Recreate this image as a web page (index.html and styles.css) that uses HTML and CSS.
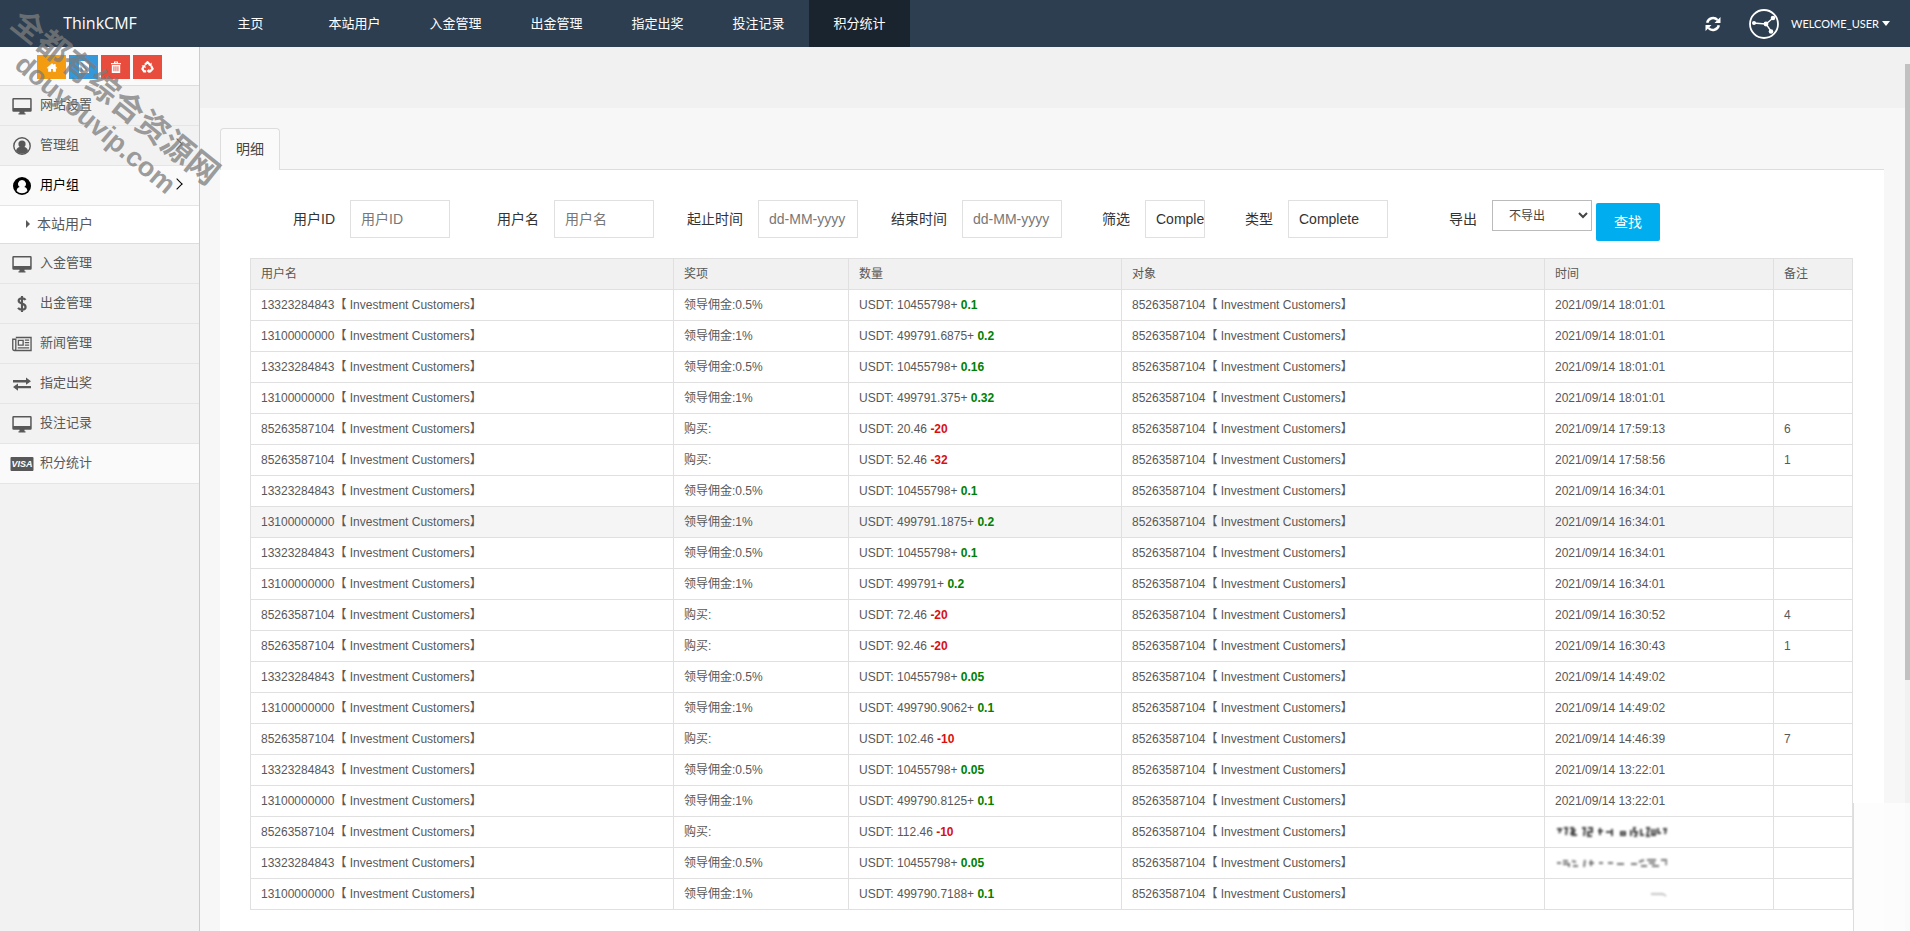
FILE: index.html
```html
<!DOCTYPE html>
<html lang="zh-CN">
<head>
<meta charset="utf-8">
<title>ThinkCMF</title>
<link rel="stylesheet" href="styles.css">
</head>
<body>
<svg class="defs" aria-hidden="true">
  <symbol id="i-desktop" viewBox="0 0 20 18"><path fill-rule="evenodd" d="M1.500 1h17a1.200 1.200 0 0 1 1.200 1.200v11.300a1.200 1.200 0 0 1-1.200 1.200h-6v1.500h1V17.500h-7v-1.300h1v-1.500h-6A1.200 1.200 0 0 1 .3 13.500V2.200A1.200 1.200 0 0 1 1.500 1zm.3 1.400v8.600h16.400V2.400z"/></symbol>
  <symbol id="i-user" viewBox="0 0 18 18"><circle cx="9" cy="9" r="8.200" fill="none" stroke="currentColor" stroke-width="1.400"/><circle cx="9" cy="7" r="3.600"/><path d="M3 14c.6-3 2.400-4 3.600-4h4.800c1.200 0 3 1 3.600 4a8 8 0 0 1-12 0z"/></symbol>
  <symbol id="i-user-solid" viewBox="0 0 18 18"><circle cx="9" cy="9" r="9"/><path fill="#fafafa" d="M9 3a3.900 3.900 0 0 0-2.300 7.100C4.600 10.500 3.900 12 3.600 14a7.600 7.600 0 0 0 10.800 0c-.3-2-1-3.500-3.100-3.900A3.900 3.900 0 0 0 9 3z"/></symbol>
  <symbol id="i-dollar" viewBox="0 0 12 20"><path d="M10 5.500C9 4.200 7.700 3.700 6 3.700c-2.300 0-3.700 1-3.700 2.800 0 4 7.700 2.200 7.700 6.800 0 1.900-1.500 3-4 3-1.900 0-3.400-.7-4.400-2M6 1v18" fill="none" stroke="currentColor" stroke-width="2.400"/></symbol>
  <symbol id="i-news" viewBox="0 0 21 16"><path d="M4 1.200h16v13.600H2.500A1.700 1.700 0 0 1 .8 13V3H4v10.300c0 .8-.6 1.500-1.500 1.500M6.700 4.200h5v5h-5zM13.500 4h4.500M13.500 6.600h4.500M13.500 9.200h4.500M6 12h12" fill="none" stroke="currentColor" stroke-width="1.400"/></symbol>
  <symbol id="i-exchange" viewBox="0 0 18 14"><path d="M0 3h13V.500L18 4.200l-5 3.500V5.500H0zM18 9H5V6.500L0 10l5 3.700v-2.400h13z"/></symbol>
  <symbol id="i-caret" viewBox="0 0 4 8"><path d="M0 0l4 4-4 4z"/></symbol>
  <symbol id="i-home" viewBox="0 0 14 12"><path d="M7 1L.8 6.500l.7.800L2.500 6.500V11h3.400V7.800h2.200V11h3.400V6.500l1 .8.700-.8-2-1.700V1.800H9.500v1.400z"/></symbol>
  <symbol id="i-globe" viewBox="0 0 12 12"><path fill-rule="evenodd" d="M1 0h7l3 3v9H1zm1.500 1.500l6 8.500L9.500 9 4 1.500zM2.500 5v5.500H6z"/></symbol>
  <symbol id="i-trash" viewBox="0 0 12 12"><path fill-rule="evenodd" d="M1 2h3V.5h4V2h3v1.300H1zm4-.6V2h2v-.6zM1.800 4h8.400v8H1.800zm1.700 1.300v5h.9v-5zm2 0v5h.9v-5zm2 0v5h.9v-5z"/></symbol>
  <symbol id="i-recycle" viewBox="0 0 14 13"><path d="M4.200 4L7 1.300 9.800 4M11 5.500l1.500 3-2.500 2.700H8.500M5.500 11.200H3.300L1.500 8.500 3 5.500" fill="none" stroke="currentColor" stroke-width="2.400"/><path d="M11.500 1.600v4L8 4.800zM9 8.300v5l-3-2.500zM.5 5l4-.6.600 3.500z"/></symbol>
  <symbol id="i-refresh" viewBox="0 0 16 16"><path d="M2.200 6.700A6 6 0 0 1 12.500 4M13.800 9.300A6 6 0 0 1 3.500 12" fill="none" stroke="currentColor" stroke-width="2.500"/><path d="M15.500 1v6h-6zM.5 15V9h6z"/></symbol>
</svg>

<header class="topbar">
  <a class="brand" href="#">ThinkCMF</a>
  <nav class="topnav">
    <a class="home" href="#">主页</a>
    <a href="#">本站用户</a>
    <a href="#">入金管理</a>
    <a href="#">出金管理</a>
    <a href="#">指定出奖</a>
    <a href="#">投注记录</a>
    <a class="active" href="#">积分统计</a>
  </nav>
  <div class="account">
    <button class="plain" type="button" aria-label="刷新"><svg width="16" height="16"><use href="#i-refresh"/></svg></button>
    <button class="plain user" type="button">
      <svg class="avatar" viewBox="0 0 30 30"><circle cx="15" cy="15" r="14" fill="none" stroke="currentColor" stroke-width="1.800"/><path d="M4 14l13 1 7-6M17 15l5 7" fill="none" stroke="currentColor" stroke-width="1.300"/><circle cx="5" cy="14" r="2"/><circle cx="17" cy="15" r="2.400"/><circle cx="24" cy="9" r="2.300"/><circle cx="22" cy="22.500" r="2.300"/></svg>
      <span>WELCOME_USER</span>
      <svg width="8" height="5" viewBox="0 0 8 5"><path d="M0 0h8L4 5z"/></svg>
    </button>
  </div>
</header>

<div class="shell">
  <aside class="sidebar">
    <div class="shortcuts">
      <button class="orange" type="button" aria-label="首页"><svg width="12" height="11"><use href="#i-home"/></svg></button>
      <button class="blue" type="button" aria-label="编辑"><svg width="12" height="12"><use href="#i-globe"/></svg></button>
      <button class="red" type="button" aria-label="删除"><svg width="12" height="12"><use href="#i-trash"/></svg></button>
      <button class="red" type="button" aria-label="回收"><svg width="13" height="12"><use href="#i-recycle"/></svg></button>
    </div>
    <a class="item" href="#"><svg width="20" height="18"><use href="#i-desktop"/></svg>网站设置</a>
    <a class="item" href="#"><svg width="18" height="18"><use href="#i-user"/></svg>管理组<i class="arrow"></i></a>
    <a class="item open" href="#"><svg width="18" height="18"><use href="#i-user-solid"/></svg>用户组<i class="arrow"></i></a>
    <a class="subitem" href="#"><svg width="4" height="8"><use href="#i-caret"/></svg>本站用户</a>
    <a class="item" href="#"><svg width="20" height="18"><use href="#i-desktop"/></svg>入金管理</a>
    <a class="item" href="#"><svg width="12" height="18"><use href="#i-dollar"/></svg>出金管理</a>
    <a class="item" href="#"><svg width="20" height="16"><use href="#i-news"/></svg>新闻管理</a>
    <a class="item" href="#"><svg width="18" height="14"><use href="#i-exchange"/></svg>指定出奖</a>
    <a class="item" href="#"><svg width="20" height="18"><use href="#i-desktop"/></svg>投注记录</a>
    <a class="item current" href="#"><b class="visa">VISA</b>积分统计</a>
  </aside>

  <main class="content">
    <div class="strip"></div>
    <div class="tabs"><a class="tab" href="#">明细</a></div>
    <section class="panel">
      <form class="filters">
        <label for="uid">用户ID</label><input id="uid" type="text" placeholder="用户ID">
        <label for="uname">用户名</label><input id="uname" type="text" placeholder="用户名">
        <label for="from">起止时间</label><input id="from" type="text" placeholder="dd-MM-yyyy">
        <label for="to">结束时间</label><input id="to" type="text" placeholder="dd-MM-yyyy">
        <label class="narrow" for="filter">筛选</label><input id="filter" class="short" type="text" value="Complete">
        <label class="narrow" for="type">类型</label><input id="type" type="text" value="Complete">
        <label for="export">导出</label><select id="export"><option>不导出</option></select>
        <button class="search" type="submit">查找</button>
      </form>
      <table class="records">
        <colgroup><col class="c-user"><col class="c-award"><col class="c-amount"><col class="c-user"><col class="c-time"><col class="c-note"></colgroup>
        <thead><tr><th>用户名</th><th>奖项</th><th>数量</th><th>对象</th><th>时间</th><th>备注</th></tr></thead>
        <tbody>
          <tr><td>13323284843【 Investment Customers】</td><td>领导佣金:0.5%</td><td>USDT: 10455798+ <b class="up">0.1</b></td><td>85263587104【 Investment Customers】</td><td>2021/09/14 18:01:01</td><td></td></tr>
          <tr><td>13100000000【 Investment Customers】</td><td>领导佣金:1%</td><td>USDT: 499791.6875+ <b class="up">0.2</b></td><td>85263587104【 Investment Customers】</td><td>2021/09/14 18:01:01</td><td></td></tr>
          <tr><td>13323284843【 Investment Customers】</td><td>领导佣金:0.5%</td><td>USDT: 10455798+ <b class="up">0.16</b></td><td>85263587104【 Investment Customers】</td><td>2021/09/14 18:01:01</td><td></td></tr>
          <tr><td>13100000000【 Investment Customers】</td><td>领导佣金:1%</td><td>USDT: 499791.375+ <b class="up">0.32</b></td><td>85263587104【 Investment Customers】</td><td>2021/09/14 18:01:01</td><td></td></tr>
          <tr><td>85263587104【 Investment Customers】</td><td>购买:</td><td>USDT: 20.46 <b class="down">-20</b></td><td>85263587104【 Investment Customers】</td><td>2021/09/14 17:59:13</td><td>6</td></tr>
          <tr><td>85263587104【 Investment Customers】</td><td>购买:</td><td>USDT: 52.46 <b class="down">-32</b></td><td>85263587104【 Investment Customers】</td><td>2021/09/14 17:58:56</td><td>1</td></tr>
          <tr><td>13323284843【 Investment Customers】</td><td>领导佣金:0.5%</td><td>USDT: 10455798+ <b class="up">0.1</b></td><td>85263587104【 Investment Customers】</td><td>2021/09/14 16:34:01</td><td></td></tr>
          <tr class="hovered"><td>13100000000【 Investment Customers】</td><td>领导佣金:1%</td><td>USDT: 499791.1875+ <b class="up">0.2</b></td><td>85263587104【 Investment Customers】</td><td>2021/09/14 16:34:01</td><td></td></tr>
          <tr><td>13323284843【 Investment Customers】</td><td>领导佣金:0.5%</td><td>USDT: 10455798+ <b class="up">0.1</b></td><td>85263587104【 Investment Customers】</td><td>2021/09/14 16:34:01</td><td></td></tr>
          <tr><td>13100000000【 Investment Customers】</td><td>领导佣金:1%</td><td>USDT: 499791+ <b class="up">0.2</b></td><td>85263587104【 Investment Customers】</td><td>2021/09/14 16:34:01</td><td></td></tr>
          <tr><td>85263587104【 Investment Customers】</td><td>购买:</td><td>USDT: 72.46 <b class="down">-20</b></td><td>85263587104【 Investment Customers】</td><td>2021/09/14 16:30:52</td><td>4</td></tr>
          <tr><td>85263587104【 Investment Customers】</td><td>购买:</td><td>USDT: 92.46 <b class="down">-20</b></td><td>85263587104【 Investment Customers】</td><td>2021/09/14 16:30:43</td><td>1</td></tr>
          <tr><td>13323284843【 Investment Customers】</td><td>领导佣金:0.5%</td><td>USDT: 10455798+ <b class="up">0.05</b></td><td>85263587104【 Investment Customers】</td><td>2021/09/14 14:49:02</td><td></td></tr>
          <tr><td>13100000000【 Investment Customers】</td><td>领导佣金:1%</td><td>USDT: 499790.9062+ <b class="up">0.1</b></td><td>85263587104【 Investment Customers】</td><td>2021/09/14 14:49:02</td><td></td></tr>
          <tr><td>85263587104【 Investment Customers】</td><td>购买:</td><td>USDT: 102.46 <b class="down">-10</b></td><td>85263587104【 Investment Customers】</td><td>2021/09/14 14:46:39</td><td>7</td></tr>
          <tr><td>13323284843【 Investment Customers】</td><td>领导佣金:0.5%</td><td>USDT: 10455798+ <b class="up">0.05</b></td><td>85263587104【 Investment Customers】</td><td>2021/09/14 13:22:01</td><td></td></tr>
          <tr><td>13100000000【 Investment Customers】</td><td>领导佣金:1%</td><td>USDT: 499790.8125+ <b class="up">0.1</b></td><td>85263587104【 Investment Customers】</td><td>2021/09/14 13:22:01</td><td></td></tr>
          <tr class="faded"><td>85263587104【 Investment Customers】</td><td>购买:</td><td>USDT: 112.46 <b class="down">-10</b></td><td>85263587104【 Investment Customers】</td><td><svg class="smudge" viewBox="0 0 112 12"><path d="M2 3h4l-2 4M9 2h3l-1 7M15 2h3l-2 7M20 3l-2 6h4M27 2h3l-1 8M33 2h4v4h-4v4h4M45 2v7M43 5h5M51 6h5M57 3v7M66 6h4v3h-4zM76 4v6M81 2h-2v4h3l-1 4h-2M86 3v6h3M91 2h3l-2 8h3M97 3v6h3V3M103 2v5h3M108 3h3l-1 5" fill="none" stroke="#444" stroke-width="2"/></svg></td><td></td></tr>
          <tr class="faded"><td>13323284843【 Investment Customers】</td><td>领导佣金:0.5%</td><td>USDT: 10455798+ <b class="up">0.05</b></td><td>85263587104【 Investment Customers】</td><td><svg class="smudge" viewBox="0 0 112 12"><path d="M2 6h4M8 4h5M8 7h6v3M17 4l4 1M18 9h5M30 3l-1 7M34 6h5M36 3v6M44 6h4M53 6h5M62 7h7M76 7h6M84 5l5-2M86 9h6M92 3h9M94 6h6M97 9h7M106 3h6l-1 5" fill="none" stroke="#777" stroke-width="2"/></svg></td><td></td></tr>
          <tr class="faded"><td>13100000000【 Investment Customers】</td><td>领导佣金:1%</td><td>USDT: 499790.7188+ <b class="up">0.1</b></td><td>85263587104【 Investment Customers】</td><td><svg class="smudge" viewBox="0 0 112 12"><path d="M96 6h12l3 2" fill="none" stroke="#888" stroke-width="1"/></svg></td><td></td></tr>
        </tbody>
      </table>
    </section>
  </main>
  <div class="scrolltrack"><div class="thumb"></div></div>
</div>

<div class="haze"></div>
<div class="watermark"><span class="wm-title">全都有综合资源网</span><span class="wm-site">douyouvip.com</span></div>
</body>
</html>
```
FILE: styles.css
```css
* { box-sizing: border-box; }
html, body { height: 100%; }
body {
  position: relative;
  margin: 0;
  display: flex;
  flex-direction: column;
  overflow: hidden;
  font: 13px/20px "Open Sans", "Noto Sans CJK SC", sans-serif;
  color: #585858;
  background: #f2f2f2;
}
a { color: inherit; text-decoration: none; }
button { font: inherit; cursor: pointer; }
svg { fill: currentColor; flex: none; }
.defs { position: absolute; width: 0; height: 0; }

.topbar {
  display: flex;
  height: 47px;
  flex: none;
  background: #2c3e50;
  color: #fff;
}
.brand {
  width: 200px;
  text-align: center;
  font-size: 16px;
  line-height: 47px;
}
.topnav { display: flex; line-height: 47px; }
.topnav a { width: 101px; text-align: center; }
.topnav .home { margin-right: 3px; }
.topnav .active { background: #1a242f; }
.account {
  display: flex;
  align-items: center;
  gap: 28px;
  margin-left: auto;
  padding-right: 20px;
}
.plain { display: flex; align-items: center; padding: 0; border: 0; background: none; color: #fff; }
.user { gap: 3px; font-family: Lato, "Open Sans", sans-serif; font-size: 11px; }
.avatar { width: 30px; height: 30px; margin-right: 9px; }

.shell { display: flex; flex: 1; min-height: 0; }
.sidebar { width: 200px; flex: none; border-right: 1px solid #ccc; background: #f2f2f2; }
.shortcuts {
  display: flex;
  justify-content: center;
  gap: 3px;
  height: 39px;
  padding-top: 8px;
  background: #fafafa;
  border-bottom: 1px solid #ddd;
}
.shortcuts button {
  display: flex;
  align-items: center;
  justify-content: center;
  width: 29px;
  height: 24px;
  padding: 0;
  border: 0;
  color: #fff;
}
.orange { background: #f39c12; }
.blue { background: #3498db; }
.red { background: #e74c3c; }
.item {
  position: relative;
  display: flex;
  align-items: center;
  height: 40px;
  padding: 0 0 4px 40px;
  border-bottom: 1px solid #e5e5e5;
}
.item svg, .visa { position: absolute; left: 22px; top: 50%; transform: translate(-50%, -50%); }
.visa {
  padding: 0 1px;
  border-radius: 1px;
  background: #585858;
  color: #fff;
  font: italic bold 9px/14px "Liberation Sans", sans-serif;
}
.arrow {
  width: 8px;
  height: 8px;
  margin: 0 18px 0 auto;
  border: solid currentColor;
  border-width: 1px 1px 0 0;
  transform: rotate(45deg);
}
.open { background: #fafafa; color: #000; }
.current { background: #fafafa; }
.subitem {
  display: flex;
  align-items: center;
  gap: 7px;
  height: 38px;
  padding: 0 0 2px 26px;
  background: #fff;
  border-bottom: 1px solid #ddd;
  font-size: 14px;
}

.content { flex: 1; min-width: 0; display: flex; flex-direction: column; background: #f7f7f7; }
.strip { height: 61px; flex: none; background: #f1f1f1; }
.tabs {
  display: flex;
  flex: none;
  margin: 20px 21px 0 20px;
  border-bottom: 1px solid #ddd;
}
.tab {
  height: 42px;
  margin-bottom: -1px;
  padding: 0 15px;
  border: 1px solid #ddd;
  border-bottom: 0;
  border-radius: 4px 4px 0 0;
  background: #fafafa;
  font-size: 14px;
  line-height: 40px;
  color: #444;
}
.panel {
  flex: 1;
  margin: 0 21px 0 20px;
  padding: 30px 31px 0 30px;
  background: #fff;
}
.filters {
  display: flex;
  align-items: flex-start;
  gap: 4px;
  font: 14px/38px "Liberation Sans", "Noto Sans CJK SC", sans-serif;
  color: #333;
}
.filters label { width: 96px; padding-right: 11px; text-align: right; flex: none; }
.filters .narrow { width: 75px; }
.filters input {
  width: 100px;
  height: 38px;
  padding: 0 0 0 10px;
  border: 1px solid #e0e0e0;
  font: inherit;
  color: #333;
}
.filters .short { width: 60px; }
.filters input::placeholder { color: #777; }
.filters select {
  width: 100px;
  height: 31px;
  padding: 0 0 0 12px;
  border: 1px solid #bbb;
  border-radius: 0;
  background: #fff;
  color: #444;
  font: 12px "Liberation Sans", "Noto Sans CJK SC", sans-serif;
}
.search {
  height: 38px;
  margin-top: 3px;
  padding: 0 18px;
  border: 0;
  border-radius: 2px;
  background: #00adee;
  color: #fff;
}

.records {
  width: 100%;
  margin-top: 17px;
  table-layout: fixed;
  border-collapse: collapse;
  font: 12px/20px "Liberation Sans", "Noto Sans CJK SC", sans-serif;
}
.c-user { width: 423px; }
.c-award { width: 175px; }
.c-amount { width: 273px; }
.c-time { width: 229px; }
.records th, .records td {
  height: 31px;
  padding: 5px 10px;
  border: 1px solid #e0e0e0;
  text-align: left;
  font-weight: normal;
  white-space: nowrap;
}
.records th { background: #f1f1f1; }
.hovered { background: #f5f5f5; }
.records .up { color: #008000; }
.records .down { color: #d81010; }
.faded td:nth-child(n+5) { border-left-color: #f4f4f4; }
.smudge { display: block; width: 112px; height: 12px; filter: blur(1px); }

.scrolltrack { width: 5px; flex: none; padding-top: 17px; background: #f1f1f1; }
.thumb { height: 71%; background: #c1c1c1; }

.haze {
  position: absolute;
  right: 0;
  bottom: 0;
  width: 57px;
  height: 128px;
  border-left: 1px solid #ddd;
  background: rgba(253, 253, 253, .8);
  pointer-events: none;
}

.watermark {
  position: absolute;
  left: 0;
  top: 0;
  color: rgba(125, 125, 125, .75);
  font: bold 32px/32px "Liberation Sans", "Noto Sans CJK SC", sans-serif;
  pointer-events: none;
  white-space: nowrap;
}
.watermark span { position: absolute; transform-origin: 0 50%; }
.wm-title { left: 16px; top: 1px; transform: rotate(39deg); }
.wm-site { left: 19px; top: 44px; font-size: 27px; transform: rotate(40deg); }
```
